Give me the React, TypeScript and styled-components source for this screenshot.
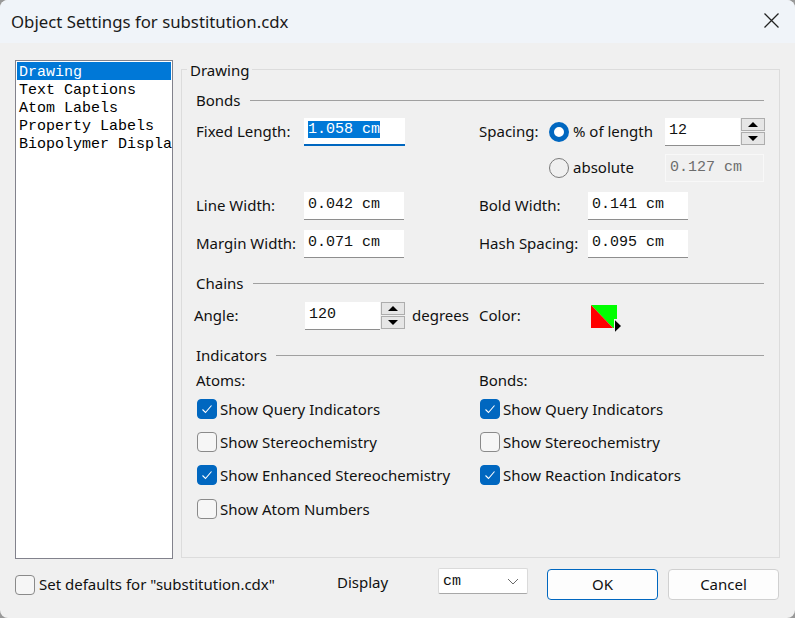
import React from "react"
import styled, { createGlobalStyle } from "styled-components"

const GlobalStyle = createGlobalStyle`
  html, body {
    margin: 0;
    padding: 0;
    background: #999;
    overflow: hidden;
  }
`

const Dialog = styled.div`
  width: 795px;
  height: 618px;
  background: #f0f0f0;
  border-radius: 8px;
  overflow: hidden;
  font-family: "Noto Sans", "Open Sans", sans-serif;
  font-size: 15px;
  color: #111;
  display: flex;
  flex-direction: column;
`

const TitleBar = styled.div`
  height: 43px;
  flex: none;
  background: #f0f4f9;
  display: flex;
  align-items: center;
  justify-content: space-between;
  padding: 0 16px 0 11px;
`

const Title = styled.span`
  font-size: 16.8px;
  color: #1a1a1a;
`

const CloseIcon = styled.svg`
  width: 15px;
  height: 15px;
  display: block;
  margin-bottom: 2px;
`

const Main = styled.div`
  height: 498px;
  flex: none;
  display: flex;
  padding: 17px 15px 0 15px;
  box-sizing: border-box;
  gap: 8px;
`

const List = styled.div`
  width: 158px;
  height: 499px;
  flex: none;
  box-sizing: border-box;
  border: 1px solid #82828c;
  background: #fff;
  padding: 1px;
  overflow: hidden;
  font-family: "Liberation Mono", monospace;
  font-size: 15px;
  line-height: 17px;
`

const ListItem = styled.div<{ $selected?: boolean }>`
  white-space: nowrap;
  box-sizing: border-box;
  height: 18px;
  padding: 2px 0 0 2px;
  background: ${(p) => (p.$selected ? "#0078d7" : "transparent")};
  color: ${(p) => (p.$selected ? "#fff" : "#000")};
`

const GroupBox = styled.div`
  position: relative;
  width: 599px;
  height: 489px;
  margin-top: 9px;
  box-sizing: border-box;
  border: 1px solid #dcdcdc;
  padding: 19px 15px 0 14px;
`

const Legend = styled.span`
  position: absolute;
  top: -9px;
  left: 5px;
  padding: 0 3px;
  background: #f0f0f0;
  line-height: 18px;
`

const SectionHead = styled.div<{ $top?: number }>`
  display: flex;
  align-items: center;
  gap: 9px;
  height: 22px;
  margin-top: ${(p) => p.$top ?? 0}px;
  width: 568px;
  line-height: 20px;

  &::after {
    content: "";
    flex: 1;
    height: 1px;
    background: #a0a0a0;
  }
`

const Row = styled.div<{ $h?: number; $top?: number }>`
  display: grid;
  grid-template-columns: 283px 1fr;
  height: ${(p) => p.$h ?? 28}px;
  margin-top: ${(p) => p.$top ?? 0}px;
`

const Cell = styled.div<{ $shift?: number }>`
  display: flex;
  align-items: center;
  margin-left: ${(p) => p.$shift ?? 0}px;
`

const Label = styled.span<{ $w?: number; $left?: number; $flat?: boolean }>`
  width: ${(p) => (p.$w ? `${p.$w}px` : "auto")};
  margin-left: ${(p) => p.$left ?? 0}px;
  margin-bottom: ${(p) => (p.$flat ? 0 : 2)}px;
  flex: none;
  white-space: nowrap;
`

const Field = styled.div<{ $w?: number; $disabled?: boolean; $focused?: boolean }>`
  width: ${(p) => p.$w ?? 100}px;
  height: 28px;
  flex: none;
  box-sizing: border-box;
  background: ${(p) => (p.$disabled ? "#f0f0f0" : "#fff")};
  border: ${(p) => (p.$disabled ? "1px solid #f8f8f8" : "none")};
  border-bottom: ${(p) =>
    p.$focused ? "2px solid #0067c0" : p.$disabled ? "1px solid #f8f8f8" : "1px solid #8e8e8e"};
  color: ${(p) => (p.$disabled ? "#6d6d6d" : "#111")};
  font-family: "Liberation Mono", monospace;
  font-size: 15px;
  line-height: 18px;
  padding: ${(p) => (p.$focused ? 3 : 4)}px 3px 0 4px;
  white-space: pre;
`

const Selected = styled.span`
  background: #0078d7;
  color: #fff;
`

const Spin = styled.div`
  display: flex;
  flex-direction: column;
  justify-content: space-between;
  width: 24px;
  height: 27px;
  margin: 0 0 1px 1px;
  flex: none;
`

const SpinButton = styled.div`
  height: 13px;
  box-sizing: border-box;
  border: 1px solid #adadad;
  background: #e6e6e6;
  display: flex;
  align-items: center;
  justify-content: center;
`

const Arrow = styled.i<{ $down?: boolean }>`
  display: block;
  width: 0;
  height: 0;
  border-left: 5px solid transparent;
  border-right: 5px solid transparent;
  ${(p) => (p.$down ? "border-top: 5px solid #000;" : "border-bottom: 5px solid #000;")}
`

const Radio = styled.span<{ $on?: boolean }>`
  width: 20px;
  height: 20px;
  flex: none;
  box-sizing: border-box;
  border-radius: 50%;
  margin-right: 4px;
  ${(p) =>
    p.$on
      ? "border: 5.5px solid #0067c0; background: #fff;"
      : "border: 1px solid #7a7a7a; background: transparent;"}
`

const CheckBox = styled.span<{ $on?: boolean; $gap?: number }>`
  width: 20px;
  height: 20px;
  flex: none;
  box-sizing: border-box;
  border-radius: 4px;
  margin-right: ${(p) => p.$gap ?? 3}px;
  display: flex;
  align-items: center;
  justify-content: center;
  background: ${(p) => (p.$on ? "#0067c0" : "#f6f6f6")};
  border: 1px solid ${(p) => (p.$on ? "#0067c0" : "#8a8a8a")};
`

const CheckList = styled.div`
  margin-top: 1px;
`

const CheckRow = styled.div`
  display: grid;
  grid-template-columns: 283px 1fr;
  height: 33.4px;
  padding-left: 1px;
`

const Swatch = styled.svg`
  width: 30px;
  height: 28px;
  display: block;
  flex: none;
  margin-top: 6px;
`

const Footer = styled.div`
  flex: 1;
  display: flex;
  align-items: flex-start;
  padding: 27px 16px 0 15px;
`

const FootCheck = styled.div`
  display: flex;
  align-items: center;
  width: 322px;
  height: 20px;
  margin-top: 7px;
  flex: none;
`

const FootLabel = styled.span`
  width: 101px;
  flex: none;
  margin-top: 4px;
`

const Select = styled.div`
  width: 90px;
  height: 26px;
  flex: none;
  box-sizing: border-box;
  background: #fff;
  border: 1px solid #dadada;
  border-bottom-color: #a8a8a8;
  border-radius: 2px;
  display: flex;
  align-items: center;
  justify-content: space-between;
  padding: 0 8px 0 4px;
  font-family: "Liberation Mono", monospace;
  font-size: 15px;
`

const Button = styled.div<{ $primary?: boolean }>`
  width: 111px;
  height: 31px;
  flex: none;
  margin: 1px 0 0 ${(p) => (p.$primary ? 19 : 10)}px;
  padding-bottom: 2px;
  box-sizing: border-box;
  background: #fdfdfd;
  border: 1px solid ${(p) => (p.$primary ? "#0067c0" : "#d0d0d0")};
  border-radius: 4px;
  display: flex;
  align-items: center;
  justify-content: center;
`

const Check = ({ on, children }: { on?: boolean; children: React.ReactNode }) => (
  <Cell>
    <CheckBox $on={on}>
      {on && (
        <svg width="12" height="10" viewBox="0 0 12 10" fill="none">
          <path d="M1.5 5.5 L4.5 8.5 L10.5 1.5" stroke="#fff" strokeWidth="1.1" />
        </svg>
      )}
    </CheckBox>
    <Label $flat>{children}</Label>
  </Cell>
)

const Spinner = () => (
  <Spin>
    <SpinButton>
      <Arrow />
    </SpinButton>
    <SpinButton>
      <Arrow $down />
    </SpinButton>
  </Spin>
)

const App = () => {
  return (
    <Dialog>
      <GlobalStyle />
      <TitleBar>
        <Title>Object Settings for substitution.cdx</Title>
        <CloseIcon viewBox="0 0 15 15">
          <path d="M0.5 0.5 L14.5 14.5 M14.5 0.5 L0.5 14.5" stroke="#222" strokeWidth="1.3" />
        </CloseIcon>
      </TitleBar>
      <Main>
        <List>
          <ListItem $selected>Drawing</ListItem>
          <ListItem>Text Captions</ListItem>
          <ListItem>Atom Labels</ListItem>
          <ListItem>Property Labels</ListItem>
          <ListItem>Biopolymer Display</ListItem>
        </List>
        <GroupBox>
          <Legend>Drawing</Legend>
          <SectionHead>Bonds</SectionHead>
          <Row $top={7}>
            <Cell>
              <Label $w={108}>Fixed Length:</Label>
              <Field $w={101} $focused>
                <Selected>1.058 cm</Selected>
              </Field>
            </Cell>
            <Cell>
              <Label $w={70}>Spacing:</Label>
              <Radio $on />
              <Label $w={92}>% of length</Label>
              <Field $w={75}>12</Field>
              <Spinner />
            </Cell>
          </Row>
          <Row $top={8}>
            <Cell />
            <Cell $shift={70}>
              <Radio />
              <Label $w={92}>absolute</Label>
              <Field $w={99} $disabled>0.127 cm</Field>
            </Cell>
          </Row>
          <Row $top={10}>
            <Cell>
              <Label $w={108}>Line Width:</Label>
              <Field>0.042 cm</Field>
            </Cell>
            <Cell>
              <Label $w={109}>Bold Width:</Label>
              <Field>0.141 cm</Field>
            </Cell>
          </Row>
          <Row $top={10}>
            <Cell>
              <Label $w={108}>Margin Width:</Label>
              <Field>0.071 cm</Field>
            </Cell>
            <Cell>
              <Label $w={109}>Hash Spacing:</Label>
              <Field>0.095 cm</Field>
            </Cell>
          </Row>
          <SectionHead $top={14}>Chains</SectionHead>
          <Row $top={5}>
            <Cell $shift={-2}>
              <Label $w={111}>Angle:</Label>
              <Field $w={75}>120</Field>
              <Spinner />
              <Label $left={7}>degrees</Label>
            </Cell>
            <Cell>
              <Label $w={112}>Color:</Label>
              <Swatch viewBox="0 0 30 28">
                <path d="M0 0 H26 V14 H23 V23 H22 Z" fill="#00ff00" />
                <path d="M0 0 L22 23 H0 Z" fill="#ff0000" />
                <path d="M24 15.3 V26.7 L30 21 Z" fill="#000" />
              </Swatch>
            </Cell>
          </Row>
          <SectionHead $top={17}>Indicators</SectionHead>
          <Row $h={22} $top={3}>
            <Cell>
              <Label $flat>Atoms:</Label>
            </Cell>
            <Cell>
              <Label $flat>Bonds:</Label>
            </Cell>
          </Row>
          <CheckList>
            <CheckRow>
              <Check on>Show Query Indicators</Check>
              <Check on>Show Query Indicators</Check>
            </CheckRow>
            <CheckRow>
              <Check>Show Stereochemistry</Check>
              <Check>Show Stereochemistry</Check>
            </CheckRow>
            <CheckRow>
              <Check on>Show Enhanced Stereochemistry</Check>
              <Check on>Show Reaction Indicators</Check>
            </CheckRow>
            <CheckRow>
              <Check>Show Atom Numbers</Check>
              <Cell />
            </CheckRow>
          </CheckList>
        </GroupBox>
      </Main>
      <Footer>
        <FootCheck>
          <CheckBox $gap={4} />
          <Label>Set defaults for "substitution.cdx"</Label>
        </FootCheck>
        <FootLabel>Display</FootLabel>
        <Select>
          cm
          <svg width="12" height="7" viewBox="0 0 12 7" fill="none">
            <path d="M1 1 L6 6 L11 1" stroke="#6a6a6a" strokeWidth="1" />
          </svg>
        </Select>
        <Button $primary>OK</Button>
        <Button>Cancel</Button>
      </Footer>
    </Dialog>
  )
}

export default App
